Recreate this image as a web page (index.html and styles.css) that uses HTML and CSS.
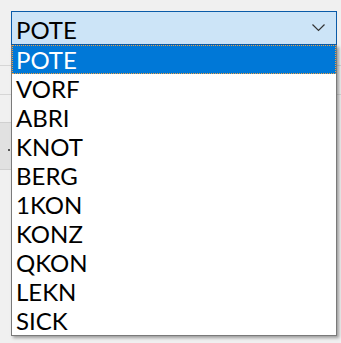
FILE: index.html
```html
<!DOCTYPE html>
<html lang="en">
<head>
<meta charset="UTF-8">
<title>Station</title>
<link rel="stylesheet" href="styles.css">
</head>
<body>
  <div class="form">
    <!-- selected value -->
    <div class="combo">
      <span class="combo-value">POTE</span>
      <svg class="chevron" width="13" height="8" viewBox="0 0 13 8">
        <path d="M0.5 0.5 L6.5 6.5 L12.5 0.5" fill="none" stroke="#333" stroke-width="1.2"/>
      </svg>
    </div>

    <!-- rows of the form behind the dropdown -->
    <div class="row first"></div>
    <div class="row"></div>
    <div class="btn-row"><span class="tick"></span></div>

    <!-- open dropdown list -->
    <ul class="list">
      <li class="item selected">POTE</li>
      <li class="item">VORF</li>
      <li class="item">ABRI</li>
      <li class="item">KNOT</li>
      <li class="item">BERG</li>
      <li class="item">1KON</li>
      <li class="item">KONZ</li>
      <li class="item">QKON</li>
      <li class="item">LEKN</li>
      <li class="item">SICK</li>
    </ul>
  </div>
</body>
</html>
```

FILE: styles.css
```css
body{
  margin:0;
  background:#f0f0f0;
  font-family:Lato,'Open Sans',sans-serif;
  height:343px;
  overflow:hidden;
}
.form{position:relative;padding-top:11px;}

.combo{
  margin-left:11px;
  width:326px;
  height:34px;
  box-sizing:border-box;
  border:1px solid #0a5ba8;
  background:#cce4f7;
  display:flex;
  align-items:center;
  justify-content:space-between;
  padding:0 11px 0 4px;
}
.combo-value{font-size:24px;line-height:29px;color:#000;margin-top:2px;}
.chevron{display:block;margin-top:-1px;}

.row{
  height:1px;
  background:#d6d6d6;
  margin-top:28px;
}
.row.first{margin-top:20px;}
.btn-row{
  margin-top:27px;
  height:48px;
  width:11px;
  box-sizing:border-box;
  background:#e1e1e1;
  border-top:1px solid #d0d0d0;
  border-bottom:1px solid #d0d0d0;
  position:relative;
}
.tick{
  position:absolute;
  left:8px;top:26px;
  width:2px;height:2px;
  background:#555;
}

/* popup list sits over the form */
.list{
  position:absolute;
  top:45px;left:11px;
  width:326px;height:291px;
  box-sizing:border-box;
  margin:0;padding:0;
  list-style:none;
  background:#fff;
  border:1px solid #7a7a7a;
  border-top:none;
  box-shadow:2px 2px 3px rgba(0,0,0,.35);
}
.item{
  height:29px;
  box-sizing:border-box;
  padding:1px 0 0 4px;
  font-size:24px;
  line-height:28px;
  color:#000;
}
.item.selected{
  background:#0078d7;
  color:#fff;
  border:1px dotted #f0a040;
  line-height:27px;
  padding:0 0 0 3px;
}
```
